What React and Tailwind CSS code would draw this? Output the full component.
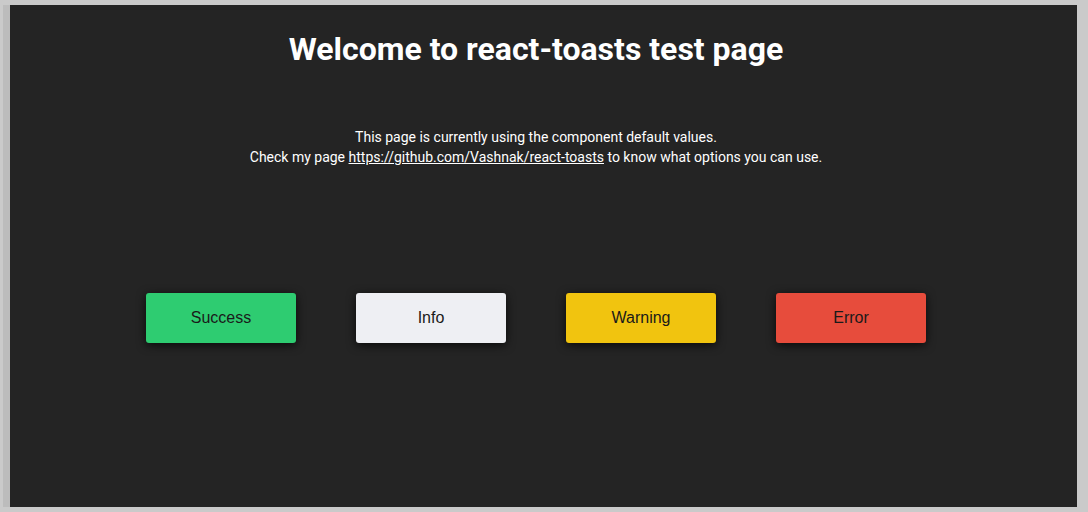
export default function App() {
  const buttons = [
    { label: "Success", cls: "bg-[#2ecc71]" },
    { label: "Info", cls: "bg-[#eeeff3]" },
    { label: "Warning", cls: "bg-[#f1c40f]" },
    { label: "Error", cls: "bg-[#e74c3c]" },
  ];

  return (
    <div className="w-[1088px] h-[512px] bg-[#cacaca] pt-[5px] pl-[3px] overflow-hidden">
      <div className="flex h-[502px]">
        <div className="w-[7px] bg-[#bcbcbc]" />
        <div className="w-[1067px] h-full bg-[#242424] pr-[15px] flex flex-col items-center font-['Roboto',sans-serif] text-white">
          <h1 className="mt-[25px] text-[32px] leading-[38px] font-bold">
            Welcome to react-toasts test page
          </h1>
          <div className="mt-[59px] text-[14px] leading-[20px] text-center">
            <p>This page is currently using the component default values.</p>
            <p>
              Check my page{" "}
              <a href="#" className="underline">
                https://github.com/Vashnak/react-toasts
              </a>{" "}
              to know what options you can use.
            </p>
          </div>
          <div className="mt-[126px] flex gap-[60px]">
            {buttons.map((b) => (
              <button
                key={b.label}
                className={`w-[150px] h-[50px] rounded-[3px] ${b.cls} text-[#1a1a1a] text-[16px] font-['Liberation_Sans',Arial,sans-serif] shadow-[0_2px_10px_rgba(0,0,0,0.75)]`}
              >
                {b.label}
              </button>
            ))}
          </div>
        </div>
      </div>
    </div>
  );
}
